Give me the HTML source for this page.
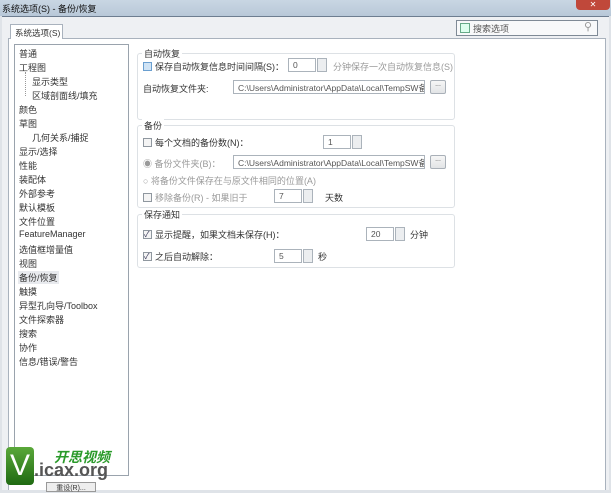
<!DOCTYPE html>
<html><head><meta charset="utf-8"><style>
*{margin:0;padding:0;box-sizing:border-box}
body{width:611px;height:490px;overflow:hidden;background:#dfe3e8;font-family:"Liberation Sans","Noto Sans CJK SC",sans-serif;font-size:9px;color:#333;position:relative}
.a{position:absolute;white-space:nowrap}
.title{left:0;top:0;width:611px;height:16px;background:linear-gradient(#c9d6e3,#b8c8d8);}
.dlg{left:2px;top:16px;width:607px;height:474px;background:#eef0f3;border-top:1px solid #6d7d90}
.panel{left:8px;top:38px;width:598px;height:452px;background:#fff;border:1px solid #a9b2bd;border-bottom:none}
.tab{left:10px;top:24px;width:53px;height:15px;background:#fff;border:1px solid #a9b2bd;border-bottom:none;padding:2px 4px;font-size:8.5px}
.list{left:14px;top:44px;width:115px;height:432px;border:1px solid #9aa3ad;background:#fff}
.li{left:4px;font-size:9px}
.grp{border:1px solid #dde1e5;border-radius:3px}
.gl{background:#fff;padding:0 2px;font-size:9px}
.cb{width:9px;height:9px;border:1px solid #8f979f;background:#f4f4f4}
.inp{border:1px solid #abb3bb;background:#fff;height:14px;padding:1px 4px;font-size:8.5px;color:#555;overflow:hidden}
.spin{border:1px solid #abb3bb;background:#eceef0;height:14px;width:10px}
.btn{border:1px solid #a9b0b8;background:linear-gradient(#f6f6f6,#e2e4e6);border-radius:2px;width:16px;height:14px;font-size:7px;text-align:center;color:#555}
.g{color:#9a9a9a}
</style></head><body>
<div class="a title"></div>
<div class="a" style="left:2px;top:2px;font-size:9px;color:#111">系统选项(S) - 备份/恢复</div>
<div class="a" style="left:576px;top:0;width:34px;height:10px;background:#c0483a;border-radius:0 0 4px 4px;color:#fff;text-align:center;font-size:8px;line-height:10px">✕</div>
<div class="a dlg"></div>
<div class="a" style="left:456px;top:20px;width:142px;height:16px;border:1px solid #7f8a96;background:#f8f9fa"></div>
<div class="a" style="left:460px;top:23px;width:10px;height:10px;border:1px solid #6a8;background:#dfe"></div>
<div class="a" style="left:473px;top:22px;font-size:9px;color:#555">搜索选项</div>
<div class="a" style="left:584px;top:20px;font-size:11px;color:#999">⚲</div>
<div class="a panel"></div>
<div class="a tab">系统选项(S)</div>
<div class="a list">
<div class="a li" style="top:2px">普通</div>
<div class="a li" style="top:16px">工程图</div>
<div class="a li" style="top:30px;left:17px">显示类型</div>
<div class="a li" style="top:44px;left:17px">区域剖面线/填充</div>
<div class="a" style="left:10px;top:27px;width:6px;height:24px;border-left:1px dotted #999"></div>
<div class="a li" style="top:58px">颜色</div>
<div class="a li" style="top:72px">草图</div>
<div class="a li" style="top:86px;left:17px">几何关系/捕捉</div>
<div class="a li" style="top:100px">显示/选择</div>
<div class="a li" style="top:114px">性能</div>
<div class="a li" style="top:128px">装配体</div>
<div class="a li" style="top:142px">外部参考</div>
<div class="a li" style="top:156px">默认模板</div>
<div class="a li" style="top:170px">文件位置</div>
<div class="a li" style="top:184px">FeatureManager</div>
<div class="a li" style="top:198px">选值框增量值</div>
<div class="a li" style="top:212px">视图</div>
<div class="a li" style="top:226px;background:#e8eaee;padding:0 1px;left:3px">备份/恢复</div>
<div class="a li" style="top:240px">触摸</div>
<div class="a li" style="top:254px">异型孔向导/Toolbox</div>
<div class="a li" style="top:268px">文件探索器</div>
<div class="a li" style="top:282px">搜索</div>
<div class="a li" style="top:296px">协作</div>
<div class="a li" style="top:310px">信息/错误/警告</div>
</div>

<div class="a grp" style="left:137px;top:53px;width:318px;height:67px"></div>
<div class="a gl" style="left:142px;top:47px">自动恢复</div>
<div class="a cb" style="left:143px;top:62px;background:#cfe3f5;border-color:#6a9fd0"></div>
<div class="a" style="left:155px;top:60px">保存自动恢复信息时间间隔(S)：</div>
<div class="a inp" style="left:288px;top:58px;width:28px">0</div>
<div class="a spin" style="left:317px;top:58px"></div>
<div class="a g" style="left:333px;top:60px">分钟保存一次自动恢复信息(S)</div>
<div class="a" style="left:143px;top:82px">自动恢复文件夹:</div>
<div class="a inp" style="left:233px;top:80px;width:192px">C:\Users\Administrator\AppData\Local\TempSW备份</div>
<div class="a btn" style="left:430px;top:80px">...</div>

<div class="a grp" style="left:137px;top:125px;width:318px;height:83px"></div>
<div class="a gl" style="left:142px;top:119px">备份</div>
<div class="a cb" style="left:143px;top:138px"></div>
<div class="a" style="left:155px;top:136px">每个文档的备份数(N)：</div>
<div class="a inp" style="left:323px;top:135px;width:28px">1</div>
<div class="a spin" style="left:352px;top:135px"></div>
<div class="a g" style="left:143px;top:157px">◉ 备份文件夹(B)：</div>
<div class="a inp" style="left:233px;top:155px;width:192px">C:\Users\Administrator\AppData\Local\TempSW备份</div>
<div class="a btn" style="left:430px;top:155px">...</div>
<div class="a g" style="left:143px;top:174px">○ 将备份文件保存在与原文件相同的位置(A)</div>
<div class="a cb" style="left:143px;top:193px"></div>
<div class="a g" style="left:155px;top:191px">移除备份(R) - 如果旧于</div>
<div class="a inp" style="left:274px;top:189px;width:28px">7</div>
<div class="a spin" style="left:303px;top:189px"></div>
<div class="a" style="left:325px;top:191px">天数</div>

<div class="a grp" style="left:137px;top:214px;width:318px;height:54px"></div>
<div class="a gl" style="left:142px;top:208px">保存通知</div>
<div class="a cb" style="left:143px;top:230px;font-size:8px;line-height:7px;color:#335">✓</div>
<div class="a" style="left:155px;top:228px">显示提醒，如果文档未保存(H)：</div>
<div class="a inp" style="left:366px;top:227px;width:28px">20</div>
<div class="a spin" style="left:395px;top:227px"></div>
<div class="a" style="left:410px;top:228px">分钟</div>
<div class="a cb" style="left:143px;top:252px;font-size:8px;line-height:7px;color:#335">✓</div>
<div class="a" style="left:155px;top:250px">之后自动解除：</div>
<div class="a inp" style="left:274px;top:249px;width:28px">5</div>
<div class="a spin" style="left:303px;top:249px"></div>
<div class="a" style="left:318px;top:250px">秒</div>

<div class="a" style="left:6px;top:447px;width:28px;height:38px;background:linear-gradient(#5aa83a,#1f6a12);border-radius:4px;color:#fff;font-size:30px;line-height:38px;text-align:center">V</div>
<div class="a" style="left:54px;top:447px;color:#2a9a2a;font-weight:bold;font-style:italic;font-size:14px">开思视频</div>
<div class="a" style="left:34px;top:460px;color:#555;font-weight:bold;font-size:18px">.icax.org</div>
<div class="a" style="left:46px;top:482px;width:50px;height:10px;border:1px solid #999;background:#eee;font-size:7px;text-align:center">重设(R)...</div>
</body></html>
